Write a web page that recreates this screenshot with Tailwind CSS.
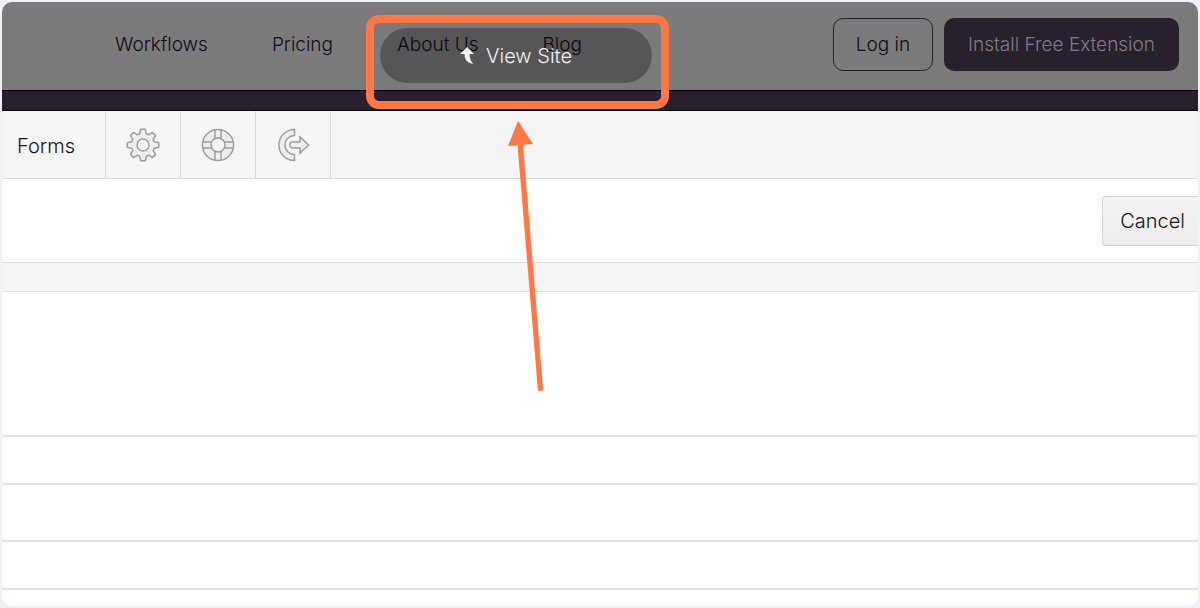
<!DOCTYPE html>
<html lang="en">
<head>
    <meta charset="UTF-8">
    <meta name="viewport" content="width=device-width, initial-scale=1.0">
    <title>View Site</title>
    <script src="https://cdn.jsdelivr.net/npm/@tailwindcss/browser@4"></script>
</head>
<body class="bg-[#f1f1f8] p-[2px] font-['Inter',sans-serif] font-light text-xl leading-6">
    <div class="relative flex flex-col min-h-[calc(100vh-4px)] bg-white rounded-[10px] overflow-hidden">

        <!-- Site header -->
        <header class="flex items-center justify-between h-[88px] pb-1 pl-[113px] pr-[19px] bg-[#7b7b7b] text-[#100d16] text-[19px]">
            <nav class="flex gap-16 pt-[2px]">
                <a href="#">Workflows</a>
                <a href="#">Pricing</a>
                <a href="#">About Us</a>
                <a href="#">Blog</a>
            </nav>
            <div class="flex gap-[11px]">
                <button class="h-[53px] px-[22px] pt-[2px] border border-[#26222c] rounded-[10px]">Log in</button>
                <button class="h-[53px] px-6 pt-[2px] rounded-[10px] bg-[#28212d] text-[#7f7a83]">Install Free Extension</button>
            </div>
        </header>
        <div class="h-[21px] bg-[#28212d] border-y border-black"></div>

        <!-- Toolbar -->
        <div class="flex h-[68px] bg-[#f5f5f5] border-b border-[#dcdcdc] text-[#9f9f9f]">
            <a href="#" class="flex items-center w-[104px] pl-[15px] pt-[2px] border-r border-[#d9d9d9] text-[#161616]">Forms</a>
            <button aria-label="Settings" class="flex items-center justify-center w-[75px] border-r border-[#d9d9d9]">
                <svg class="size-[34px]" viewBox="-17 -17 34 34" fill="#eeeeee" stroke="currentColor" stroke-width="1.5" stroke-linejoin="round">
                    <path d="M-3.3-11.2L-2.3-15.8H2.3L3.3-11.2L5.6-10.2L9.4-12.6L12.6-9.4L10.2-5.6L11.2-3.3L15.8-2.3V2.3L11.2 3.3L10.2 5.6L12.6 9.4L9.4 12.6L5.6 10.2L3.3 11.2L2.3 15.8H-2.3L-3.3 11.2L-5.6 10.2L-9.4 12.6L-12.6 9.4L-10.2 5.6L-11.2 3.3L-15.8 2.3V-2.3L-11.2-3.3L-10.2-5.6L-12.6-9.4L-9.4-12.6L-5.6-10.2Z"/>
                    <circle r="6" fill="#f5f5f5"/>
                </svg>
            </button>
            <button aria-label="Help" class="flex items-center justify-center w-[75px] border-r border-[#d9d9d9]">
                <svg class="size-[34px]" viewBox="-17 -17 34 34" fill="#eeeeee" stroke="currentColor" stroke-width="1.5">
                    <circle r="15.6"/>
                    <path fill="#f5f5f5" d="M-3-15.3V-6.5M3-15.3V-6.5M-3 15.3V6.5M3 15.3V6.5M-15.3-3H-6.5M-15.3 3H-6.5M15.3-3H6.5M15.3 3H6.5"/>
                    <circle r="7" fill="#f5f5f5"/>
                </svg>
            </button>
            <button aria-label="Log out" class="flex items-center justify-center w-[75px] border-r border-[#d9d9d9]">
                <svg class="size-[34px]" viewBox="-17 -17 34 34" fill="#eeeeee" stroke="currentColor" stroke-width="1.5">
                    <path d="M1.5-15.6A15.6 15.6 0 0 0 1.5 15.6V9.6A9.6 9.6 0 0 1 1.5-9.6Z"/>
                    <path d="M-.2-3H7V-8L15.6 0L7 8V3H-.2A3 3 0 0 1-.2-3Z"/>
                </svg>
            </button>
        </div>

        <!-- Actions -->
        <div class="flex justify-end items-center h-[84px] border-b border-[#dcdcdc]">
            <button class="h-[50px] pl-[17px] pr-[13px] border border-r-0 border-[#d3d3d3] rounded-l-[4px] bg-linear-to-b from-[#f4f4f4] to-[#ececec] text-[#161616]">Cancel</button>
        </div>
        <div class="h-[29px] bg-[#f5f5f5] border-b border-[#e0e0e0]"></div>

        <!-- Empty rows -->
        <div class="h-[145px] border-b-2 border-[#e2e2e2]"></div>
        <div class="h-[48px] border-b-2 border-[#e2e2e2]"></div>
        <div class="h-[57px] border-b-2 border-[#e2e2e2]"></div>
        <div class="h-[48px] border-b-2 border-[#e2e2e2]"></div>

        <!-- Floating view site button -->
        <button class="absolute left-[378px] top-[26px] flex items-center justify-center gap-3 w-[272px] h-[55px] rounded-full bg-black/30 text-[#f0f0f0]">
            <svg class="w-[14px] h-[18px]" viewBox="0 0 14 18" fill="#f0f0f0">
                <path d="M7 0L14 7H9.700C9.500 11 10.500 14 13.500 16.800C8 16.500 4.400 13 4.500 7H0Z"/>
            </svg>
            View Site
        </button>

        <!-- Highlight and pointer -->
        <div class="absolute left-[364px] top-[13px] w-[303px] h-[94px] border-8 border-[#ff7742] rounded-[13px] pointer-events-none"></div>
        <svg class="absolute left-[502px] top-[119px] w-[40px] h-[271px] pointer-events-none" viewBox="0 0 40 271" fill="#ff7742">
            <path d="M14 0L29 23L19 23.700L39.200 269.500L34 270L13.500 24.200L4 25Z"/>
        </svg>
    </div>
</body>
</html>
